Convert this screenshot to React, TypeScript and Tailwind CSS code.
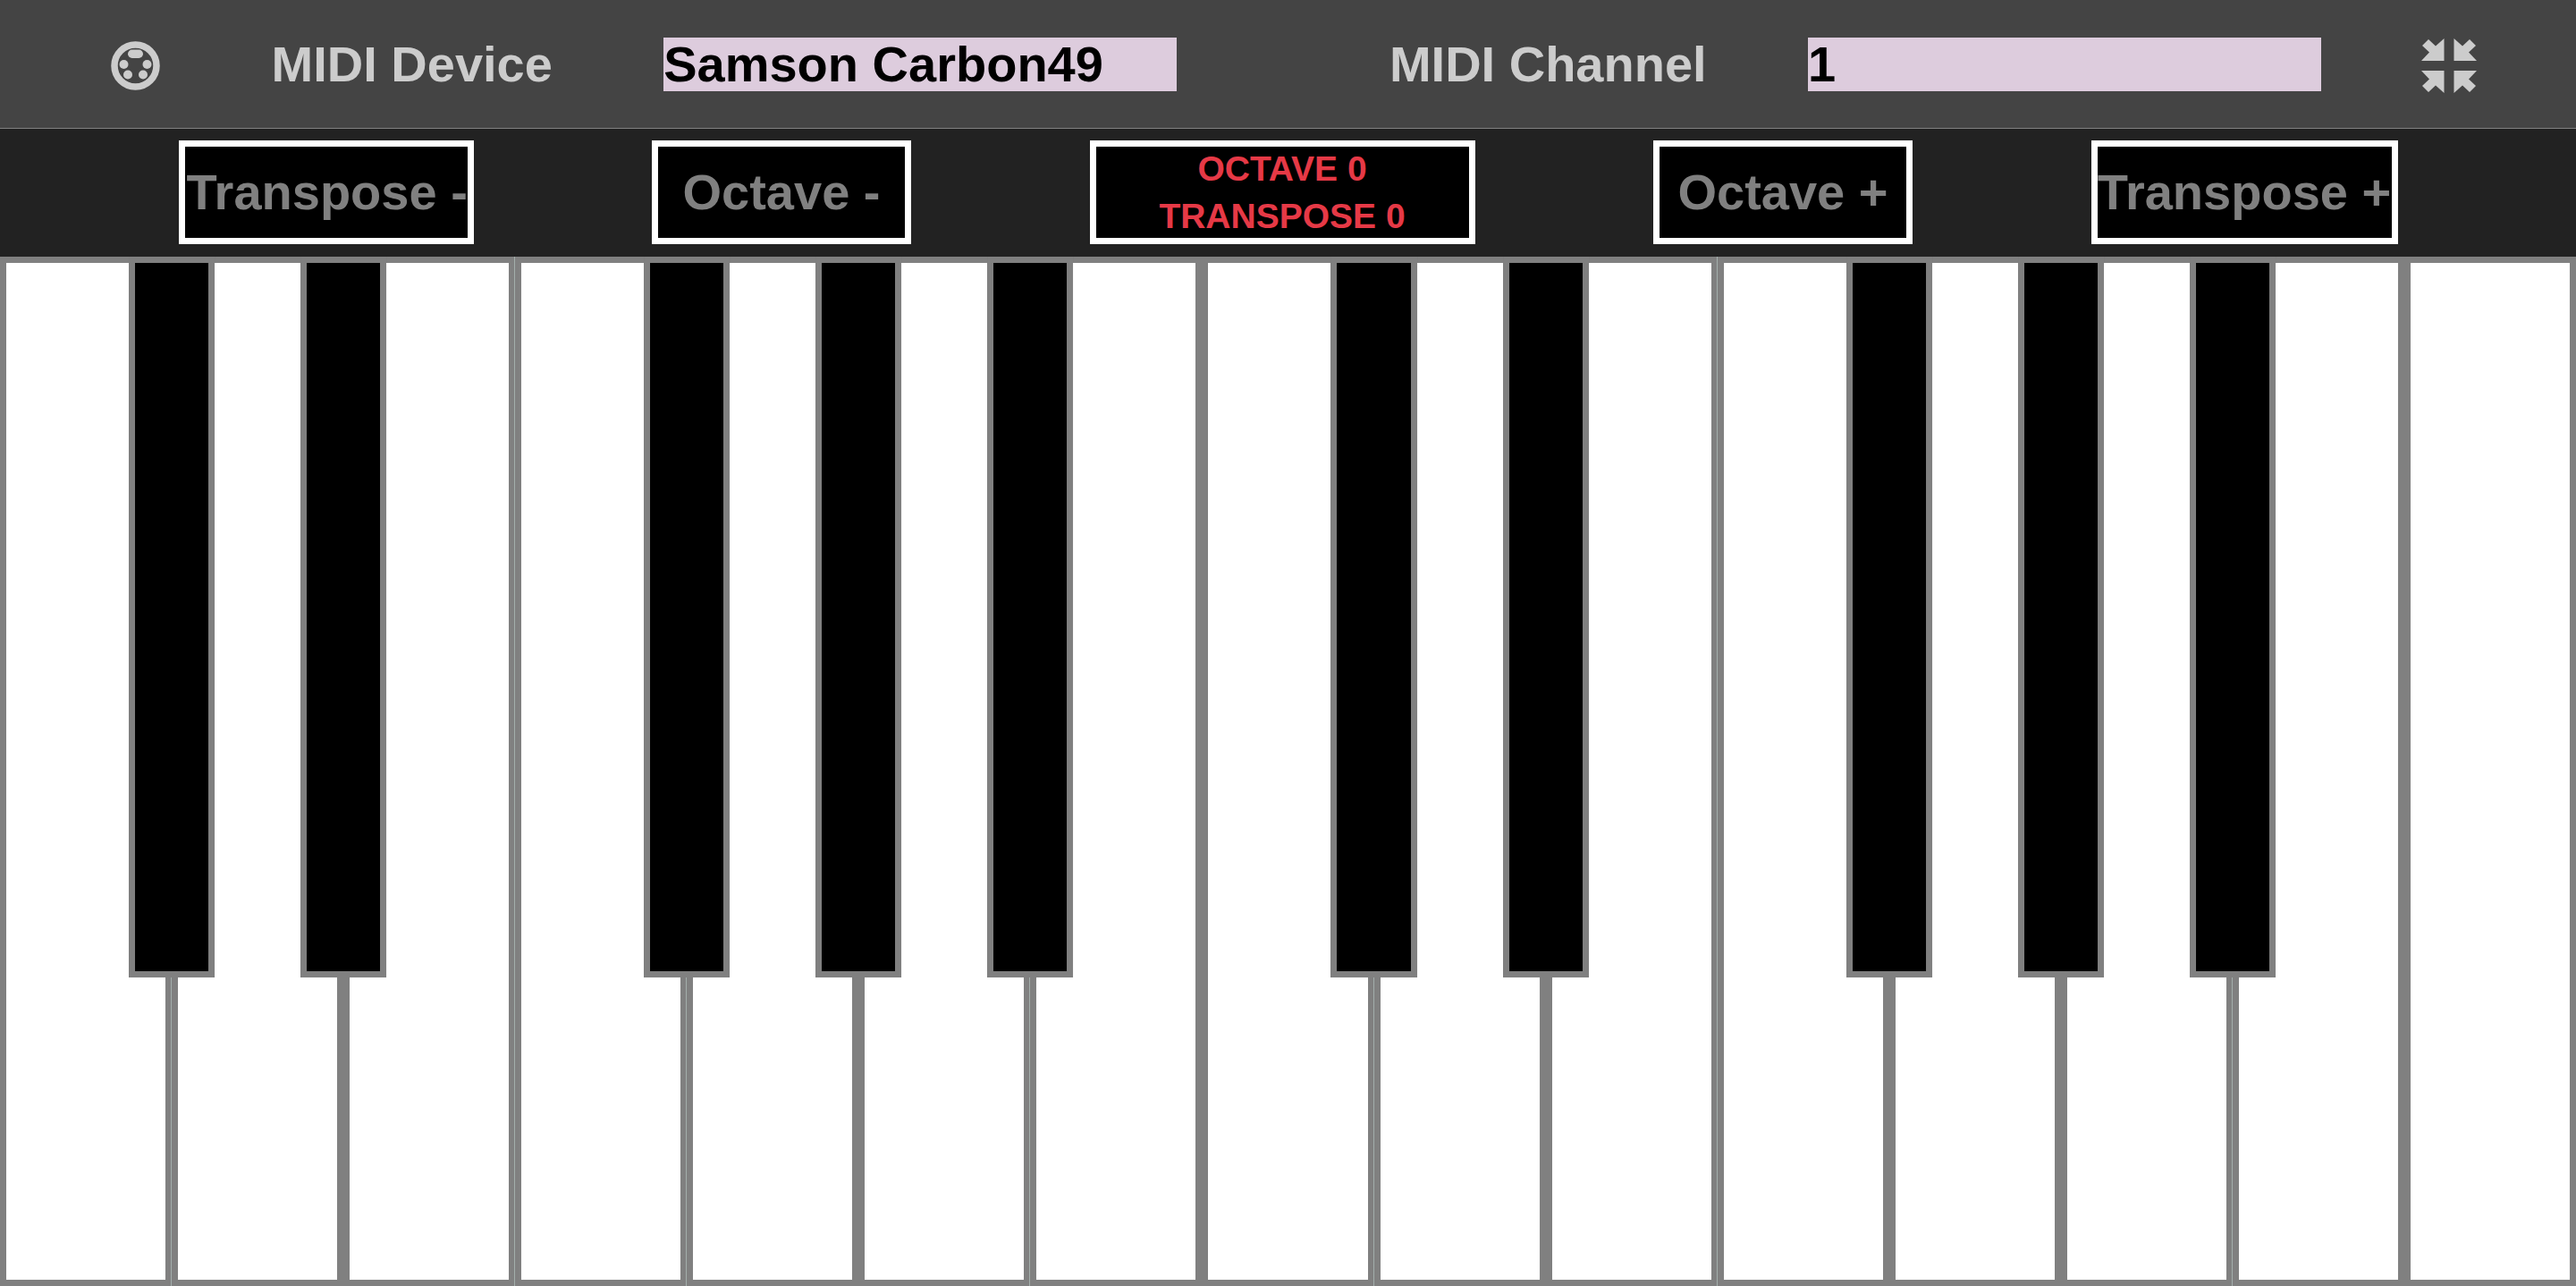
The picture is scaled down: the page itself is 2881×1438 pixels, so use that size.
import React from 'react';

const keys = [
  { note: 'C3', sharp: true, seam: true },
  { note: 'D3', sharp: true, seam: false },
  { note: 'E3', sharp: false, seam: true },
  { note: 'F3', sharp: true, seam: true },
  { note: 'G3', sharp: true, seam: false },
  { note: 'A3', sharp: true, seam: true },
  { note: 'B3', sharp: false, seam: false },
  { note: 'C4', sharp: true, seam: true },
  { note: 'D4', sharp: true, seam: false },
  { note: 'E4', sharp: false, seam: true },
  { note: 'F4', sharp: true, seam: false },
  { note: 'G4', sharp: true, seam: false },
  { note: 'A4', sharp: true, seam: true },
  { note: 'B4', sharp: false, seam: false },
  { note: 'C5', sharp: false, seam: false },
];

function MidiIcon() {
  return (
    <svg className="mt-1 h-[55px] w-[55px] shrink-0" viewBox="0 0 55 55" fill="#ccc" aria-hidden="true">
      <circle cx="27.5" cy="27.5" r="23.5" fill="none" stroke="#ccc" strokeWidth="7.5" />
      <rect x="19" y="9.5" width="17" height="9.5" rx="4.75" />
      <circle cx="14.5" cy="26" r="5" />
      <circle cx="40.5" cy="26" r="5" />
      <circle cx="19" cy="37.5" r="5" />
      <circle cx="36" cy="37.5" r="5" />
    </svg>
  );
}

function CompressIcon() {
  return (
    <svg className="mt-1 h-[61px] w-[62px]" viewBox="0 0 62 61" fill="#ccc" aria-hidden="true">
      <path d="M25.5 0V25H0L9 15.5L1 8L8 1L16 8.5Z" />
      <path d="M36.5 0V25H62L53 15.5L61 8L54 1L46 8.5Z" />
      <path d="M25.5 61V36H0L9 45.5L1 53L8 60L16 52.5Z" />
      <path d="M36.5 61V36H62L53 45.5L61 53L54 60L46 52.5Z" />
    </svg>
  );
}

const selectClass =
  'h-[60px] w-[574px] appearance-none rounded-none border-0 bg-[#dcd] p-0 text-[56px] leading-[60px] font-bold text-black';
const buttonClass =
  'h-[116px] overflow-hidden border-7 border-white bg-black text-[56px] font-bold whitespace-nowrap text-[#808080]';

export default function App() {
  return (
    <div className="flex h-screen flex-col overflow-hidden bg-[#222] font-['Liberation_Sans',Arial,sans-serif] font-bold">
      <header className="grid h-36 shrink-0 grid-cols-2 border-b border-[#808080] bg-[#444] text-[56px] text-[#ccc]">
        <div className="flex items-center justify-evenly">
          <MidiIcon />
          <label htmlFor="device">MIDI Device</label>
          <select id="device" className={selectClass}>
            <option>Samson Carbon49</option>
          </select>
        </div>
        <div className="flex items-center justify-evenly">
          <label htmlFor="channel" className="px-[2px]">MIDI Channel</label>
          <select id="channel" className={selectClass}>
            <option>1</option>
          </select>
          <button type="button" aria-label="Exit full screen">
            <CompressIcon />
          </button>
        </div>
      </header>
      <div className="flex h-[143px] shrink-0 items-start justify-evenly pt-[13px]">
        <button type="button" className={`${buttonClass} w-[330px] pl-[2px] text-left`}>Transpose -</button>
        <button type="button" className={`${buttonClass} w-[290px]`}>Octave -</button>
        <output className="flex h-[116px] w-[431px] flex-col items-center justify-center border-7 border-white bg-black text-[39px] leading-[53px] text-[#e63946]">
          <span>OCTAVE 0</span>
          <span>TRANSPOSE 0</span>
        </output>
        <button type="button" className={`${buttonClass} w-[290px]`}>Octave +</button>
        <button type="button" className={`${buttonClass} w-[343px]`}>Transpose +</button>
      </div>
      <main className="flex min-h-0 flex-1">
        {keys.map((key) => (
          <div key={key.note} className="relative flex-1">
            <button
              type="button"
              aria-label={key.note}
              className="block h-full w-full border-7 border-[#808080] bg-white"
            />
            {key.seam && <span className="absolute inset-y-0 right-0 w-px bg-[#a3aeab]" />}
            {key.sharp && (
              <button
                type="button"
                aria-label={`${key.note} sharp`}
                className="absolute top-0 right-0 z-10 h-7/10 w-1/2 translate-x-1/2 border-7 border-[#808080] bg-black"
              />
            )}
          </div>
        ))}
      </main>
    </div>
  );
}
